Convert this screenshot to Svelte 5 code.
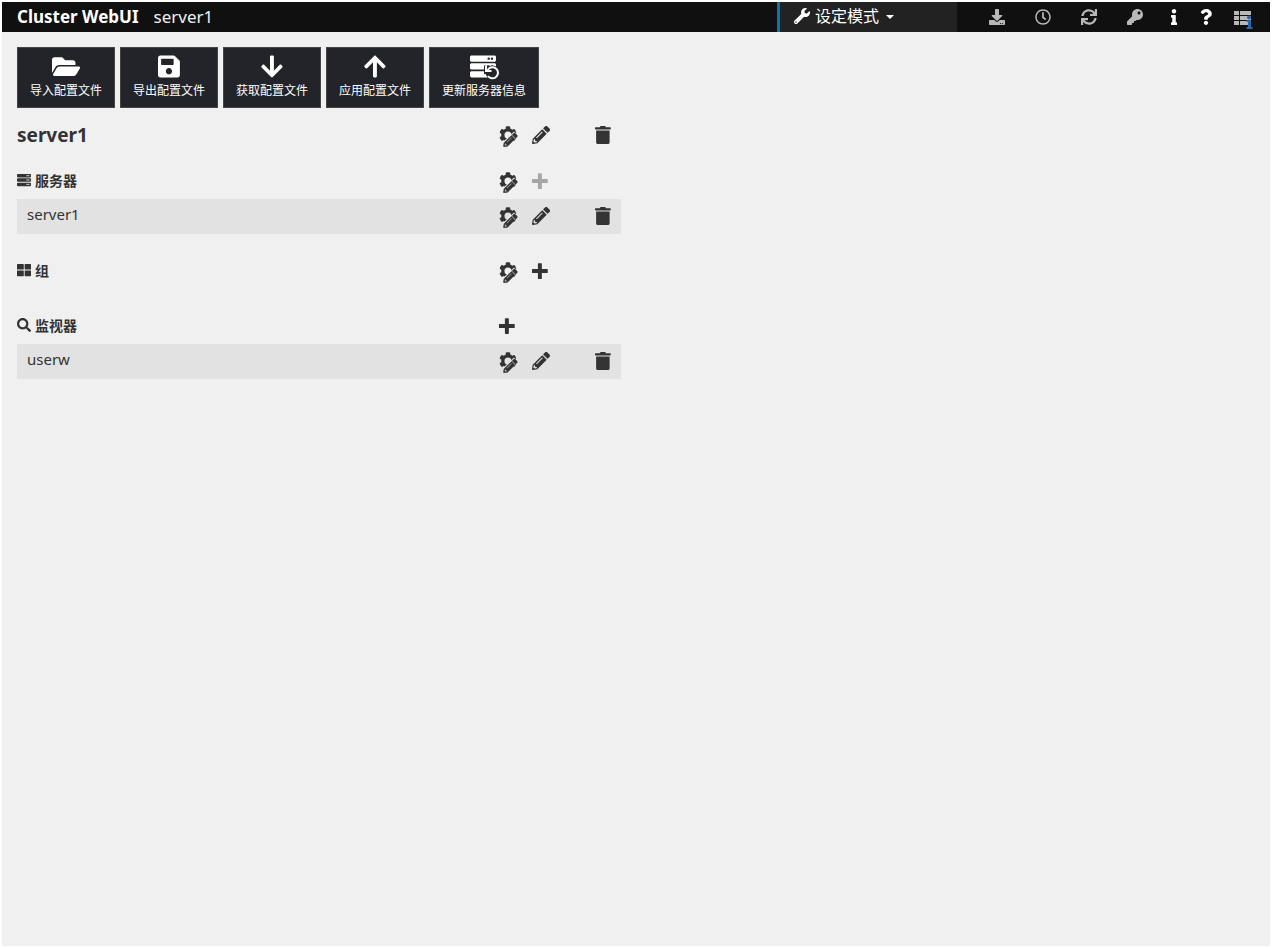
<script>
  const icons = {
    wrench: {
      w: 512,
      d: 'M507.73 109.1c-2.24-9.03-13.54-12.09-20.12-5.51l-74.36 74.36-67.88-11.31-11.31-67.88 74.36-74.36c6.62-6.62 3.43-17.9-5.66-20.16-47.38-11.74-99.55.91-136.58 37.93-39.64 39.64-50.55 97.1-34.05 147.2L18.74 402.76c-24.99 24.99-24.99 65.51 0 90.5 24.99 24.99 65.51 24.99 90.5 0l213.21-213.21c50.12 16.71 107.47 5.68 147.37-34.22 37.07-37.07 49.7-89.32 37.91-136.73zM64 472c-13.26 0-24-10.75-24-24 0-13.26 10.75-24 24-24s24 10.74 24 24c0 13.25-10.75 24-24 24z',
    },
    folder: {
      w: 576,
      d: 'M572.694 292.093L500.27 416.248A63.997 63.997 0 0 1 444.989 448H45.025c-18.523 0-30.064-20.093-20.731-36.093l72.424-124.155A64 64 0 0 1 152 256h399.964c18.523 0 30.064 20.093 20.73 36.093zM152 224h328v-48c0-26.51-21.49-48-48-48H272l-64-64H48C21.49 64 0 85.49 0 112v278.046l69.077-118.418C86.214 242.25 117.989 224 152 224z',
    },
    save: {
      w: 448,
      d: 'M433.941 129.941l-83.882-83.882A48 48 0 0 0 316.118 32H48C21.49 32 0 53.49 0 80v352c0 26.51 21.49 48 48 48h352c26.51 0 48-21.49 48-48V163.882a48 48 0 0 0-14.059-33.941zM224 416c-35.346 0-64-28.654-64-64 0-35.346 28.654-64 64-64s64 28.654 64 64c0 35.346-28.654 64-64 64zm96-304.52V212c0 6.627-5.373 12-12 12H76c-6.627 0-12-5.373-12-12V108c0-6.627 5.373-12 12-12h228.52c3.183 0 6.235 1.264 8.485 3.515l3.48 3.48A11.996 11.996 0 0 1 320 111.48z',
    },
    down: {
      w: 448,
      d: 'M413.1 222.5l22.2 22.2c9.4 9.4 9.4 24.6 0 33.9L241 473c-9.4 9.4-24.6 9.4-33.9 0L12.7 278.6c-9.4-9.4-9.4-24.6 0-33.9l22.2-22.2c9.5-9.5 25-9.3 34.3.4L184 343.4V56c0-13.3 10.7-24 24-24h32c13.3 0 24 10.7 24 24v287.4l114.8-120.5c9.3-9.8 24.8-10 34.3-.4z',
    },
    up: {
      w: 448,
      d: 'M34.9 289.5l-22.2-22.2c-9.4-9.4-9.4-24.6 0-33.9L207 39c9.4-9.4 24.6-9.4 33.9 0l194.3 194.3c9.4 9.4 9.4 24.6 0 33.9l-22.2 22.2c-9.5 9.5-25 9.3-34.3-.4L264 168.6V456c0 13.3-10.7 24-24 24h-32c-13.3 0-24-10.7-24-24V168.6L69.2 289.1c-9.3 9.8-24.8 10-34.3.4z',
    },
    download: {
      w: 512,
      d: 'M216 0h80c13.3 0 24 10.7 24 24v168h87.7c17.8 0 26.7 21.5 14.1 34.1L269.7 378.3c-7.5 7.5-19.8 7.5-27.3 0L90.1 226.1c-12.6-12.6-3.7-34.1 14.1-34.1H192V24c0-13.3 10.7-24 24-24zm296 376v112c0 13.3-10.7 24-24 24H24c-13.3 0-24-10.7-24-24V376c0-13.3 10.7-24 24-24h146.7l49 49c20.1 20.1 52.5 20.1 72.6 0l49-49H488c13.3 0 24 10.7 24 24zm-124 88c0-11-9-20-20-20s-20 9-20 20 9 20 20 20 20-9 20-20zm64 0c0-11-9-20-20-20s-20 9-20 20 9 20 20 20 20-9 20-20z',
    },
    clock: {
      w: 512,
      d: 'M256 8C119 8 8 119 8 256s111 248 248 248 248-111 248-248S393 8 256 8zm0 448c-110.5 0-200-89.5-200-200S145.5 56 256 56s200 89.5 200 200-89.5 200-200 200zm61.8-104.4l-84.9-61.7c-3.1-2.3-4.9-5.9-4.9-9.7V116c0-6.6 5.4-12 12-12h32c6.6 0 12 5.4 12 12v141.7l66.8 48.6c5.4 3.9 6.5 11.4 2.6 16.8L334.6 349c-3.9 5.3-11.4 6.5-16.8 2.6z',
    },
    sync: {
      w: 512,
      d: 'M440.65 12.57l4 82.77A247.16 247.16 0 0 0 255.83 8C134.73 8 33.91 94.92 12.29 209.82A12 12 0 0 0 24.09 224h49.05a12 12 0 0 0 11.67-9.26 175.91 175.91 0 0 1 317-56.94l-101.46-4.86a12 12 0 0 0-12.57 12v47.41a12 12 0 0 0 12 12H500a12 12 0 0 0 12-12V12a12 12 0 0 0-12-12h-47.37a12 12 0 0 0-11.98 12.57zM255.83 432a175.61 175.61 0 0 1-146-77.8l101.8 4.87a12 12 0 0 0 12.57-12v-47.4a12 12 0 0 0-12-12H12a12 12 0 0 0-12 12V500a12 12 0 0 0 12 12h47.35a12 12 0 0 0 12-12.6l-4.15-82.57A247.17 247.17 0 0 0 255.83 504c121.11 0 221.93-86.92 243.55-201.82a12 12 0 0 0-11.8-14.18h-49.05a12 12 0 0 0-11.67 9.26A175.86 175.86 0 0 1 255.83 432z',
    },
    key: {
      w: 512,
      d: 'M512 176.001C512 273.203 433.202 352 336 352c-11.22 0-22.19-1.062-32.827-3.069l-24.012 27.014A23.999 23.999 0 0 1 261.223 384H224v40c0 13.255-10.745 24-24 24h-40v40c0 13.255-10.745 24-24 24H24c-13.255 0-24-10.745-24-24v-78.059c0-6.365 2.529-12.47 7.029-16.971l161.802-161.802C163.108 213.814 160 195.271 160 176 160 78.798 238.797.001 335.999 0 433.488-.001 512 78.511 512 176.001zM336 128c0 26.51 21.49 48 48 48s48-21.49 48-48-21.49-48-48-48-48 21.49-48 48z',
    },
    info: {
      w: 192,
      d: 'M20 424.229h20V279.771H20c-11.046 0-20-8.954-20-20V212c0-11.046 8.954-20 20-20h112c11.046 0 20 8.954 20 20v212.229h20c11.046 0 20 8.954 20 20V492c0 11.046-8.954 20-20 20H20c-11.046 0-20-8.954-20-20v-47.771c0-11.046 8.954-20 20-20zM96 0C56.235 0 24 32.235 24 72s32.235 72 72 72 72-32.235 72-72S135.764 0 96 0z',
    },
    question: {
      w: 384,
      d: 'M202.021 0C122.202 0 70.503 32.703 29.914 91.026c-7.363 10.58-5.093 25.086 5.178 32.874l43.138 32.709c10.373 7.865 25.132 6.026 33.253-4.148 25.049-31.381 43.63-49.449 82.757-49.449 30.764 0 68.816 19.799 68.816 49.631 0 22.552-18.617 34.134-48.993 51.164-35.423 19.86-82.299 44.576-82.299 106.405V320c0 13.255 10.745 24 24 24h72.471c13.255 0 24-10.745 24-24v-5.773c0-42.86 125.268-44.645 125.268-160.627C377.504 66.256 286.902 0 202.021 0zM192 373.459c-38.196 0-69.271 31.075-69.271 69.271 0 38.195 31.075 69.27 69.271 69.27s69.271-31.075 69.271-69.271-31.075-69.27-69.271-69.27z',
    },
    pencil: {
      w: 512,
      d: 'M497.9 142.1l-46.1 46.1c-4.7 4.7-12.3 4.7-17 0l-111-111c-4.7-4.7-4.7-12.3 0-17l46.1-46.1c18.7-18.7 49.1-18.7 67.9 0l60.1 60.1c18.8 18.7 18.8 49.1 0 67.9zM284.2 99.8L21.6 362.4.4 483.9c-2.9 16.4 11.4 30.6 27.8 27.8l121.5-21.3 262.6-262.6c4.7-4.7 4.7-12.3 0-17l-111-111c-4.8-4.7-12.4-4.7-17.1 0zM124.1 339.9c-5.5-5.5-5.5-14.3 0-19.8l154-154c5.5-5.5 14.3-5.5 19.8 0s5.5 14.3 0 19.8l-154 154c-5.5 5.5-14.3 5.5-19.8 0zM88 424h48v36.3l-64.5 11.3-31.1-31.1L51.7 376H88v48z',
    },
    trash: {
      w: 448,
      d: 'M432 32H312l-9.4-18.7A24 24 0 0 0 281.1 0H166.8a23.72 23.72 0 0 0-21.4 13.3L136 32H16A16 16 0 0 0 0 48v32a16 16 0 0 0 16 16h416a16 16 0 0 0 16-16V48a16 16 0 0 0-16-16zM32 467a48 48 0 0 0 47.900 45h288.200a48 48 0 0 0 47.900-45V128H32z',
    },
    plus: {
      w: 448,
      d: 'M432 200H280V48c0-9-7-16-16-16h-80c-9 0-16 7-16 16v152H16c-9 0-16 7-16 16v80c0 9 7 16 16 16h152v152c0 9 7 16 16 16h80c9 0 16-7 16-16V312h152c9 0 16-7 16-16v-80c0-9-7-16-16-16z',
    },
    search: {
      w: 512,
      d: 'M505 442.7L405.3 343c-4.5-4.5-10.6-7-17-7H372c27.6-35.3 44-79.7 44-128C416 93.1 322.9 0 208 0S0 93.1 0 208s93.1 208 208 208c48.3 0 92.7-16.4 128-44v16.3c0 6.4 2.5 12.5 7 17l99.7 99.7c9.4 9.4 24.6 9.4 33.9 0l28.3-28.3c9.4-9.4 9.4-24.6.1-34zM208 336c-70.7 0-128-57.2-128-128 0-70.7 57.2-128 128-128 70.7 0 128 57.2 128 128 0 70.7-57.2 128-128 128z',
    },
    group: {
      w: 512,
      d: 'M24 32h200c13 0 24 11 24 24v168c0 9-7 16-16 16H16c-9 0-16-7-16-16V56c0-13 11-24 24-24zM296 32h192c13 0 24 11 24 24v168c0 9-7 16-16 16H296c-9 0-16-7-16-16V48c0-9 7-16 16-16zM16 272h216c9 0 16 7 16 16v176c0 9-7 16-16 16H24c-13 0-24-11-24-24V288c0-9 7-16 16-16zM296 272h200c9 0 16 7 16 16v168c0 13-11 24-24 24H296c-9 0-16-7-16-16V288c0-9 7-16 16-16z',
    },
    server: {
      w: 512,
      d: 'M480 160H32c-17.673 0-32-14.327-32-32V64c0-17.673 14.327-32 32-32h448c17.673 0 32 14.327 32 32v64c0 17.673-14.327 32-32 32zm-48-88a24 24 0 1 0 0 48 24 24 0 1 0 0-48zm-64 0a24 24 0 1 0 0 48 24 24 0 1 0 0-48zm112 248H32c-17.673 0-32-14.327-32-32v-64c0-17.673 14.327-32 32-32h448c17.673 0 32 14.327 32 32v64c0 17.673-14.327 32-32 32zm-48-88a24 24 0 1 0 0 48 24 24 0 1 0 0-48zm-64 0a24 24 0 1 0 0 48 24 24 0 1 0 0-48zm112 248H32c-17.673 0-32-14.327-32-32v-64c0-17.673 14.327-32 32-32h448c17.673 0 32 14.327 32 32v64c0 17.673-14.327 32-32 32zm-48-88a24 24 0 1 0 0 48 24 24 0 1 0 0-48zm-64 0a24 24 0 1 0 0 48 24 24 0 1 0 0-48z',
    },
  };

  const cog =
    'M487.4 315.7l-42.6-24.6c4.3-23.2 4.3-47 0-70.2l42.6-24.6c4.9-2.8 7.1-8.6 5.5-14-11.1-35.6-30-67.8-54.7-94.6-3.8-4.1-10-5.1-14.8-2.3L380.8 110c-17.9-15.4-38.5-27.3-60.8-35.1V25.8c0-5.6-3.9-10.5-9.4-11.7-36.7-8.2-74.3-7.8-109.2 0-5.5 1.2-9.4 6.1-9.4 11.7V75c-22.2 7.9-42.8 19.8-60.8 35.1L88.7 85.5c-4.9-2.8-11-1.9-14.8 2.3-24.7 26.7-43.6 58.9-54.7 94.6-1.7 5.4.6 11.2 5.5 14L67.3 221c-4.3 23.2-4.3 47 0 70.2l-42.6 24.6c-4.9 2.8-7.1 8.6-5.5 14 11.1 35.6 30 67.8 54.7 94.6 3.8 4.1 10 5.1 14.8 2.3l42.6-24.6c17.9 15.4 38.5 27.3 60.8 35.1v49.2c0 5.6 3.9 10.5 9.4 11.7 36.7 8.2 74.3 7.8 109.2 0 5.5-1.2 9.4-6.1 9.4-11.7v-49.2c22.2-7.9 42.8-19.8 60.8-35.1l42.6 24.6c4.9 2.8 11 1.9 14.8-2.3 24.7-26.7 43.6-58.9 54.7-94.6 1.5-5.5-.7-11.3-5.6-14.1zM256 356a100 100 0 1 1 0-200 100 100 0 1 1 0 200z';

  const tools = [
    { icon: 'folder', label: '导入配置文件' },
    { icon: 'save', label: '导出配置文件' },
    { icon: 'down', label: '获取配置文件' },
    { icon: 'up', label: '应用配置文件' },
    { icon: 'refresh', label: '更新服务器信息' },
  ];

  const menu = [
    { icon: 'download', label: '下载日志' },
    { icon: 'clock', label: '时间信息' },
    { icon: 'sync', label: '更新' },
    { icon: 'key', label: '更改密码' },
  ];

  const sections = [
    { icon: 'server', name: '服务器', settings: true, addDisabled: true, items: ['server1'] },
    { icon: 'group', name: '组', settings: true, items: [] },
    { icon: 'search', name: '监视器', items: ['userw'] },
  ];
</script>

{#snippet icon(name)}
  <svg class="icon" viewBox="0 0 {icons[name].w} 512" aria-hidden="true">
    <path d={icons[name].d} />
  </svg>
{/snippet}

{#snippet cogPencil()}
  <svg class="cog" viewBox="0 0 20 21" aria-hidden="true">
    <path d={cog} transform="scale(.035)" />
    <path class="halo" d="M3.500 20.500l1-5L15 5.500l4.500 4L8.500 20z" />
    <path
      class="thick"
      d={icons.pencil.d}
      transform="translate(4.500 7) scale(.027)"
    />
  </svg>
{/snippet}

{#snippet rowActions(name)}
  <button aria-label="{name} 属性">{@render cogPencil()}</button>
  <button aria-label="{name} 重命名">{@render icon('pencil')}</button>
  <button aria-label="{name} 删除">{@render icon('trash')}</button>
{/snippet}

<div class="page">
  <header>
    <a class="brand" href="#top">Cluster WebUI</a>
    <span class="cluster">server1</span>
    <button class="mode" aria-haspopup="true">
      {@render icon('wrench')}
      <span>设定模式</span>
      <i class="caret"></i>
    </button>
    <nav>
      {#each menu as m}
        <button class="dim" aria-label={m.label}>{@render icon(m.icon)}</button>
      {/each}
      <button class="narrow" aria-label="信息">{@render icon('info')}</button>
      <button class="narrow" aria-label="帮助">{@render icon('question')}</button>
      <button class="list" aria-label="消息列表">
        <svg viewBox="0 0 20 20" aria-hidden="true">
          <path fill="#b8b8b8" d="M1 2h5v4H1zM7 2h11v4H7zM1 7h5v4H1zM7 7h11v4H7zM1 12h5v4H1zM7 12h11v4H7z" />
          <path
            fill="#2a68ad"
            d="M16 6.500a2 2 0 1 0 .1 0zM13.500 11H18v7h1.500v2h-6v-2H15v-5h-1.500z"
          />
        </svg>
      </button>
    </nav>
  </header>

  <main>
    <div class="toolbar">
      {#each tools as tool}
        <button>
          {#if tool.icon === 'refresh'}
            <svg class="icon refresh" viewBox="0 0 29 26" aria-hidden="true">
              <path d={icons.server.d} transform="scale(.0508 .0488)" />
              <circle cx="22.500" cy="18.500" r="7" fill="#232429" />
              <path class="arrow-edge" d="M16 11.500v6.500h6" />
              <path class="arrow" d="M16 11.500v5.500h5.500M17 17l2-2.500a5.500 5.500 0 1 1-1 7.500" />
            </svg>
          {:else}
            {@render icon(tool.icon)}
          {/if}
          <span>{tool.label}</span>
        </button>
      {/each}
    </div>

    <div class="config">
      <div class="row title">
        <h1>server1</h1>
        {@render rowActions('server1')}
      </div>

      {#each sections as section}
        <section>
          <div class="row">
            <h2>{@render icon(section.icon)}<span>{section.name}</span></h2>
            {#if section.settings}
              <button aria-label="{section.name} 属性">{@render cogPencil()}</button>
            {/if}
            <button aria-label="{section.name} 添加" disabled={section.addDisabled}>
              {@render icon('plus')}
            </button>
          </div>
          {#each section.items as item}
            <div class="row item">
              <span>{item}</span>
              {@render rowActions(item)}
            </div>
          {/each}
        </section>
      {/each}
    </div>
  </main>
</div>

<style>
  :global(body) {
    background: #f0f0f0;
  }

  .page {
    box-sizing: border-box;
    min-height: 100vh;
    border: 2px solid #fff;
    background: #f0f0f0;
    color: #333;
    font-family: "Noto Sans", "Noto Sans CJK SC", sans-serif;
    font-size: 15px;
  }

  button {
    display: flex;
    align-items: center;
    padding: 0;
    border: 0;
    background: none;
    color: inherit;
    font: inherit;
    cursor: pointer;
  }

  svg {
    display: block;
    fill: currentColor;
  }

  .icon {
    height: 18px;
  }

  header {
    display: flex;
    align-items: center;
    height: 30px;
    padding-left: 15px;
    background: #101010;
    color: #fff;
    font-size: 17px;
    line-height: 28px;
  }

  .brand {
    color: #fff;
    font-weight: bold;
    text-decoration: none;
  }

  .cluster {
    margin-left: 15px;
    color: #f0f0f0;
  }

  .mode {
    box-sizing: border-box;
    gap: 5px;
    width: 180px;
    height: 30px;
    margin-left: auto;
    padding: 0 0 2px 14px;
    border-left: 3px solid #0b75ad;
    background: #222;
    font-size: 16px;
  }

  .mode .icon,
  nav .icon {
    height: 16px;
  }

  .caret {
    margin: 2px 0 0 2px;
    border: 4px solid transparent;
    border-top-color: #fff;
    border-bottom: 0;
  }

  nav {
    display: flex;
    padding: 0 6px 0 17px;
  }

  nav button {
    justify-content: center;
    width: 46px;
    height: 28px;
  }

  nav .dim {
    color: #b8b8b8;
  }

  nav .narrow {
    width: 32px;
  }

  nav .list {
    width: 42px;
  }

  .list svg {
    width: 20px;
    height: 20px;
    margin-top: 4px;
  }

  main {
    padding-top: 15px;
  }

  .toolbar {
    display: flex;
    gap: 5px;
    padding: 0 15px;
  }

  .toolbar button {
    flex-direction: column;
    gap: 2px;
    padding: 6px 12px;
    border: 1px solid #444;
    background: #232429;
    color: #fff;
    font-size: 12px;
    line-height: 20px;
  }

  .toolbar .icon {
    height: 25px;
  }

  .toolbar .refresh {
    height: 26px;
    margin-bottom: -1px;
  }

  .refresh .arrow,
  .refresh .arrow-edge {
    fill: none;
    stroke: #fff;
    stroke-width: 2;
  }

  .refresh .arrow-edge {
    stroke: #232429;
    stroke-width: 4;
  }

  .config {
    box-sizing: border-box;
    width: 50%;
    padding: 10px 15px;
  }

  .row {
    display: grid;
    grid-template-columns: 1fr 33px 63px 26px;
    align-items: center;
    height: 35px;
  }

  .row .icon {
    margin-bottom: 1px;
  }

  .title {
    margin-bottom: 11px;
  }

  h1,
  h2 {
    margin: 0;
  }

  h1 {
    padding-bottom: 2px;
    font-size: 19px;
  }

  h2 {
    display: flex;
    align-items: center;
    gap: 4px;
    padding-bottom: 3px;
    font-size: 14px;
  }

  h2 .icon {
    width: 14px;
    height: 14px;
  }

  .cog {
    width: 20px;
    height: 21px;
    margin-top: 2px;
  }

  .halo {
    fill: #f0f0f0;
  }

  .thick {
    stroke: currentColor;
    stroke-width: 20;
  }

  button:disabled {
    color: #a6a6a6;
    cursor: default;
  }

  section {
    margin-bottom: 20px;
  }

  .item {
    background: #e2e2e2;
  }

  .item span {
    padding: 0 10px 5px;
  }
</style>
